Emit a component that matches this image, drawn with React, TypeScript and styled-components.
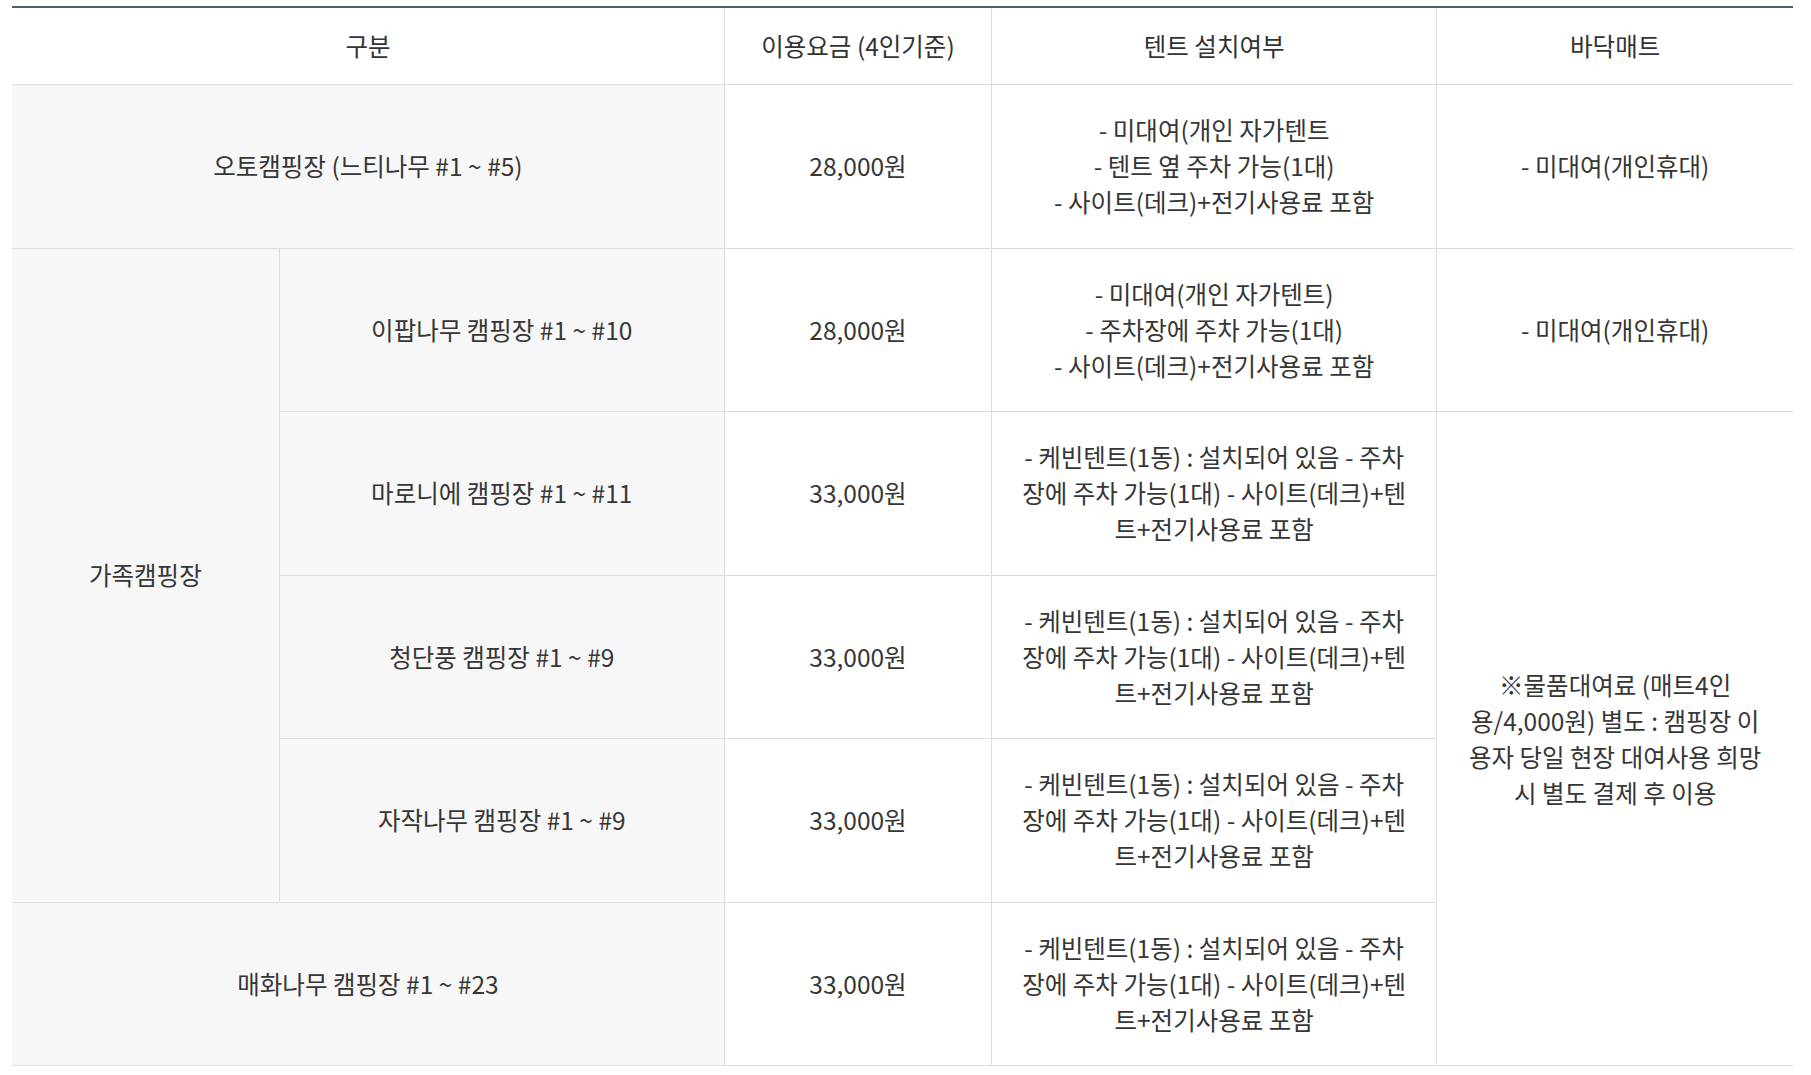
import React from "react";
import styled, { createGlobalStyle } from "styled-components";

const GlobalStyle = createGlobalStyle`
  html, body {
    margin: 0;
    padding: 0;
    background: #ffffff;
  }
  body {
    font-family: "Noto Sans CJK KR", "Noto Sans", sans-serif;
    color: #333333;
  }
`;

const Wrapper = styled.div`
  padding: 6px 18px 0 12px;
`;

const Table = styled.table`
  width: 1781px;
  border-collapse: collapse;
  table-layout: fixed;
  border-top: 2px solid #4d5e6a;
  font-size: 24.5px;
  line-height: 36px;
  color: #333333;
`;

const Th = styled.th<{ $last?: boolean }>`
  font-weight: 400;
  text-align: center;
  vertical-align: middle;
  padding: 20px 27px;
  border-bottom: 1px solid #dddddd;
  border-right: ${(p) => (p.$last ? "none" : "1px solid #dddddd")};
  color: #333333;
`;

const Td = styled.td<{ $head?: boolean; $last?: boolean }>`
  text-align: center;
  vertical-align: middle;
  padding: 27.25px 27px;
  background: ${(p) => (p.$head ? "#f7f7f7" : "#ffffff")};
  border-bottom: 1px solid #dddddd;
  border-right: ${(p) => (p.$last ? "none" : "1px solid #dddddd")};
  color: #363636;
  word-break: normal;
`;

const Lines = ({ items }: { items: string[] }) => (
  <>
    {items.map((t, i) => (
      <React.Fragment key={i}>
        {t}
        {i < items.length - 1 && <br />}
      </React.Fragment>
    ))}
  </>
);

const cabin =
  "- 케빈텐트(1동) : 설치되어 있음 - 주차장에 주차 가능(1대) - 사이트(데크)+텐트+전기사용료 포함";

const familyRows = [
  { name: "마로니에 캠핑장 #1 ~ #11", price: "33,000원" },
  { name: "청단풍 캠핑장 #1 ~ #9", price: "33,000원" },
  { name: "자작나무 캠핑장 #1 ~ #9", price: "33,000원" },
];

export default function App() {
  return (
    <>
      <GlobalStyle />
      <Wrapper>
        <Table>
          <colgroup>
            <col style={{ width: "15%" }} />
            <col style={{ width: "25%" }} />
            <col style={{ width: "15%" }} />
            <col style={{ width: "25%" }} />
            <col style={{ width: "20%" }} />
          </colgroup>
          <thead>
            <tr>
              <Th colSpan={2}>구분</Th>
              <Th>이용요금 (4인기준)</Th>
              <Th>텐트 설치여부</Th>
              <Th $last>바닥매트</Th>
            </tr>
          </thead>
          <tbody>
            <tr>
              <Td $head colSpan={2}>
                오토캠핑장 (느티나무 #1 ~ #5)
              </Td>
              <Td>28,000원</Td>
              <Td>
                <Lines
                  items={[
                    "- 미대여(개인 자가텐트",
                    "- 텐트 옆 주차 가능(1대)",
                    "- 사이트(데크)+전기사용료 포함",
                  ]}
                />
              </Td>
              <Td $last>- 미대여(개인휴대)</Td>
            </tr>
            <tr>
              <Td $head rowSpan={4}>
                가족캠핑장
              </Td>
              <Td $head>이팝나무 캠핑장 #1 ~ #10</Td>
              <Td>28,000원</Td>
              <Td>
                <Lines
                  items={[
                    "- 미대여(개인 자가텐트)",
                    "- 주차장에 주차 가능(1대)",
                    "- 사이트(데크)+전기사용료 포함",
                  ]}
                />
              </Td>
              <Td $last>- 미대여(개인휴대)</Td>
            </tr>
            {familyRows.map((r, i) => (
              <tr key={r.name}>
                <Td $head>{r.name}</Td>
                <Td>{r.price}</Td>
                <Td>{cabin}</Td>
                {i === 0 && (
                  <Td $last rowSpan={4}>
                    ※물품대여료 (매트4인용/4,000원) 별도 : 캠핑장 이용자 당일 현장
                    대여사용 희망시 별도 결제 후 이용
                  </Td>
                )}
              </tr>
            ))}
            <tr>
              <Td $head colSpan={2}>
                매화나무 캠핑장 #1 ~ #23
              </Td>
              <Td>33,000원</Td>
              <Td>{cabin}</Td>
            </tr>
          </tbody>
        </Table>
      </Wrapper>
    </>
  );
}
